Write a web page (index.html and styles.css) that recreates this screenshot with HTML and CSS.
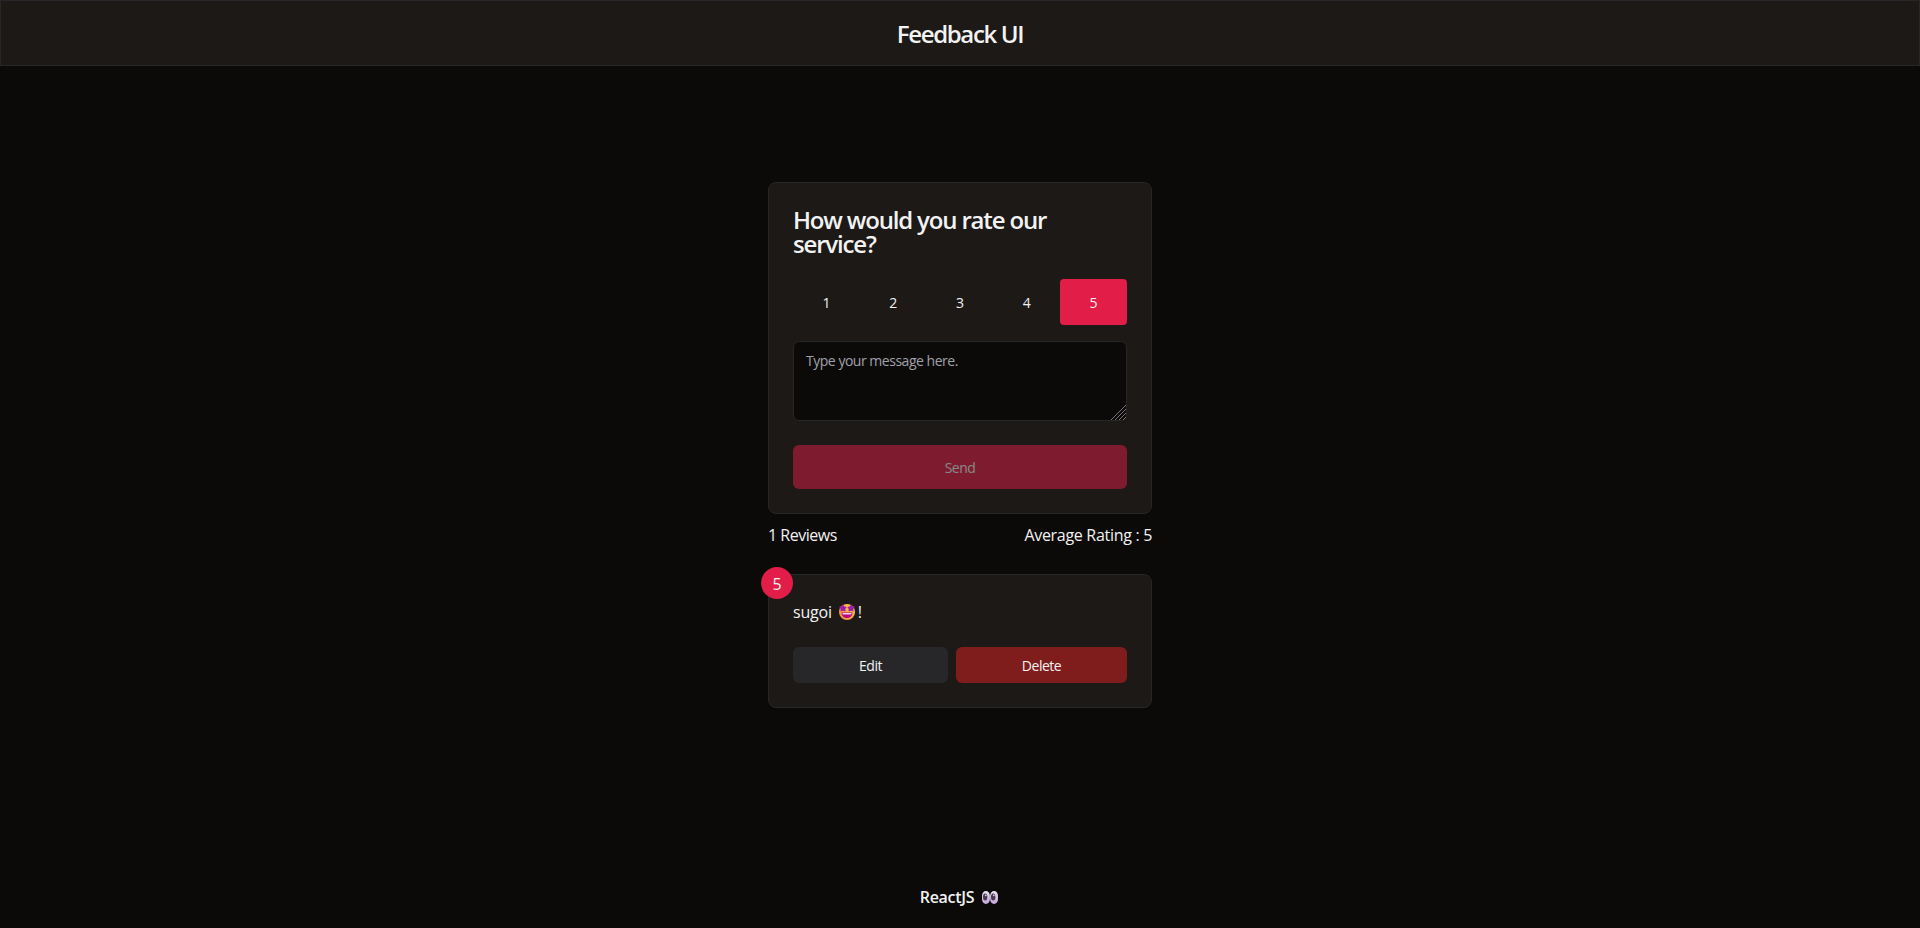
FILE: index.html
```html
<!DOCTYPE html>
<html lang="en">
<head>
<meta charset="utf-8">
<title>Feedback UI</title>
<link rel="stylesheet" href="styles.css">
</head>
<body>
<div class="page">
  <header class="header"><h1 class="brand">Feedback UI</h1></header>
  <main class="main">
    <section class="card form">
      <h2 class="question">How would you rate our service?</h2>
      <div class="ratings">
        <button class="rate">1</button>
        <button class="rate">2</button>
        <button class="rate">3</button>
        <button class="rate">4</button>
        <button class="rate selected">5</button>
      </div>
      <div class="field">
        <textarea class="message" placeholder="Type your message here."></textarea>
        <svg class="grip" width="15" height="15" viewBox="0 0 15 15" fill="none" stroke="#77757a" stroke-width="1"><path d="M0 15 15 0M4 15 15 4M8 15 15 8M12 15 15 12"/></svg>
      </div>
      <button class="btn send" disabled>Send</button>
    </section>
    <div class="stats"><span class="count">1 Reviews</span><span class="average">Average Rating : 5</span></div>
    <section class="card review">
      <span class="badge">5</span>
      <p class="comment"><span>sugoi</span>
        <svg class="emoji" width="16" height="16" viewBox="0 0 16 16" role="img" aria-label="star-struck">
          <defs><linearGradient id="face" x1="0" y1="1" x2="1" y2="0"><stop offset="0" stop-color="#f98345"/><stop offset="1" stop-color="#ffd044"/></linearGradient></defs>
          <circle cx="8" cy="8" r="8" fill="url(#face)"/>
          <path fill="#9b1dab" d="M4 .3 5.400 2.400 7.700 3.100 6.300 5 6.400 7.400 4 6.800 1.500 7.400 1.700 5 0 2.700 2.600 2.400ZM12 .3 13.400 2.400 16 2.700 14.300 5 14.500 7.400 12 6.800 9.600 7.400 9.700 5 8.300 3.100 10.600 2.400Z"/>
          <path fill="#b9067c" d="M2.500 8.500h11c0 3.300-2.300 5.500-5.500 5.500s-5.500-2.200-5.500-5.500Z"/>
          <path fill="#e8d2ef" d="M3.500 9h9v.8q0 .8-.8.8H4.300q-.8 0-.8-.8Z"/>
        </svg><span>!</span></p>
      <div class="actions">
        <button class="btn edit">Edit</button>
        <button class="btn delete">Delete</button>
      </div>
    </section>
  </main>
  <footer class="footer"><span class="tech">ReactJS</span>
    <svg class="emoji" width="16" height="13" viewBox="0 0 16 13" role="img" aria-label="eyes">
      <defs><linearGradient id="eye" x1="0" y1="0" x2="0" y2="1"><stop offset="0" stop-color="#e9e5ee"/><stop offset="1" stop-color="#c5a4dc"/></linearGradient></defs>
      <rect width="7.900" height="13" rx="3.900" ry="5" fill="url(#eye)"/>
      <rect x="8.100" width="7.900" height="13" rx="3.900" ry="5" fill="url(#eye)"/>
      <ellipse cx="3.200" cy="6" rx="2.200" ry="3.500" fill="#493952"/>
      <ellipse cx="11.200" cy="6" rx="2.200" ry="3.500" fill="#493952"/>
      <circle cx="3.800" cy="4.300" r=".9" fill="#d9d2df"/>
      <circle cx="11.800" cy="4.300" r=".9" fill="#d9d2df"/>
    </svg>
  </footer>
</div>
</body>
</html>
```
FILE: styles.css
```css
* { box-sizing: border-box; margin: 0; }
body {
  background: #0c0a09;
  color: #f2f2f2;
  font: 16px/24px "Open Sans", "Noto Sans", sans-serif;
}
button, textarea { font: inherit; color: inherit; border: 0; padding: 0; }
.page { height: 928px; display: flex; flex-direction: column; }
.header {
  height: 66px;
  border: 1px solid #27272a;
  background: #1c1917;
  display: flex;
  align-items: center;
  justify-content: center;
}
.brand { padding-top: 2px; font-size: 24px; line-height: 32px; font-weight: 600; letter-spacing: -1.35px; }
.main {
  width: 384px;
  margin: 0 auto;
  flex: 1;
  padding-top: 116px;
}
.card {
  background: #1c1917;
  border: 1px solid #27272a;
  border-radius: 8px;
  padding: 24px;
  box-shadow: 0 1px 2px rgb(0 0 0 / 5%);
}
.form { display: flex; flex-direction: column; }
.question { padding-top: 1px; font-size: 24px; line-height: 24px; font-weight: 600; letter-spacing: -1.17px; }
.ratings { margin: 23px 0 16px; height: 46px; display: grid; grid-template-columns: repeat(5, 1fr); }
.rate { background: transparent; border-radius: 4px; font-size: 14px; padding-top: 2px; }
.selected { background: #e11d48; }
.field { position: relative; height: 80px; }
.message {
  display: block;
  width: 100%;
  height: 80px;
  padding: 9px 12px;
  background: #0c0a09;
  border: 1px solid #27272a;
  border-radius: 6px;
  resize: none;
  font-size: 14px;
  line-height: 20px;
  letter-spacing: -0.48px;
}
.message::placeholder { color: #a1a1aa; }
.grip { position: absolute; right: 1px; bottom: 1px; }
.btn { border-radius: 6px; font-size: 14px; line-height: 20px; padding-top: 2px; letter-spacing: -0.5px; }
.send { margin-top: 24px; height: 44px; background: #e11d48; opacity: .5; }
.stats { display: flex; justify-content: space-between; margin: 9px 0 27px; }
.count { letter-spacing: -0.48px; }
.average { letter-spacing: -0.3px; }
.review { position: relative; height: 134px; }
.badge {
  position: absolute;
  left: -8px;
  top: -8px;
  width: 32px;
  height: 32px;
  border-radius: 50%;
  background: #e11d48;
  text-align: center;
  line-height: 34px;
}
.comment { display: flex; align-items: center; height: 24px; padding-top: 2px; letter-spacing: -0.2px; }
.comment .emoji { margin: 0 3px 0 7px; }
.actions { display: grid; grid-template-columns: 155px 171px; gap: 8px; margin-top: 24px; height: 36px; }
.edit { background: #27272a; }
.delete { background: #7f1d1d; }
.footer { height: 62px; padding-right: 2px; display: flex; align-items: center; justify-content: center; gap: 8px; font-weight: 600; }
.tech { letter-spacing: -0.3px; }
```
